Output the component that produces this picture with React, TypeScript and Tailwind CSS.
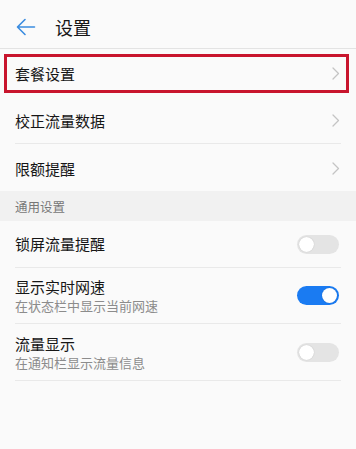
import React from "react";

const font = { fontFamily: '"Noto Sans CJK SC", "Noto Sans", sans-serif' };

function Chevron() {
  return (
    <svg width="8" height="13" viewBox="0 0 8 13" fill="none" className="mr-[16px]">
      <polyline points="1,1 6.5,6.5 1,12" stroke="#c4c4c4" strokeWidth="1.3" strokeLinecap="round" strokeLinejoin="round" />
    </svg>
  );
}

function Toggle({ on }: { on: boolean }) {
  return (
    <div
      className={
        on
          ? "mr-[17px] flex h-[19px] w-[42px] items-center justify-end rounded-full bg-[#1a7bf2] px-[2px]"
          : "mr-[17px] flex h-[19px] w-[42px] items-center justify-start rounded-full bg-[#e4e4e4] px-[2px]"
      }
    >
      <div className="h-[15px] w-[15px] rounded-full bg-white shadow-[0_0_1px_rgba(0,0,0,0.25)]" />
    </div>
  );
}

function NavRow({ label, divider, boxed }: { label: string; divider?: boolean; boxed?: boolean }) {
  return (
    <div className="relative">
      <div className="flex h-[47px] items-center justify-between pl-[15px] pt-[2px]">
        <span className="text-[15px] leading-[20px] text-[#161616]">{label}</span>
        <Chevron />
      </div>
      {divider && <div className="ml-[15px] mr-[15px] h-px bg-[#e9e9e9]" />}
      {boxed && (
        <div className="pointer-events-none absolute left-[4px] right-[7px] top-[5px] h-[39px] border-[3px] border-[#c8152d]" />
      )}
    </div>
  );
}

function ToggleRow({ label, sub, on, tall }: { label: string; sub?: string; on: boolean; tall?: boolean }) {
  const h = !sub ? "h-[46px]" : tall ? "h-[56px]" : "h-[55px]";
  return (
    <div>
      <div className={"flex items-center justify-between pl-[15px] " + h}>
        <div className="flex flex-col">
          <span className="text-[15px] leading-[20px] text-[#161616]">{label}</span>
          {sub && <span className="text-[13px] leading-[17px] text-[#8c8c8c]">{sub}</span>}
        </div>
        <Toggle on={on} />
      </div>
      <div className="ml-[15px] mr-[15px] h-px bg-[#e9e9e9]" />
    </div>
  );
}

export default function App() {
  return (
    <div className="h-[449px] w-[356px] overflow-hidden bg-[#fafafa]" style={font}>
      <header className="flex h-[49px] items-center border-b border-[#e3e3e3] pt-[6px]">
        <svg width="20" height="18" viewBox="0 0 20 18" fill="none" className="ml-[16px]">
          <path d="M18.5 9H2M9 1.5L1.5 9L9 16.5" stroke="#3a8ce0" strokeWidth="1.6" strokeLinecap="round" strokeLinejoin="round" />
        </svg>
        <h1 className="ml-[19px] text-[18px] leading-[24px] text-[#161616]">设置</h1>
      </header>

      <NavRow label="套餐设置" boxed />
      <NavRow label="校正流量数据" divider />
      <NavRow label="限额提醒" />

      <div className="flex h-[30px] items-center bg-[#f1f1f1] pl-[15px] pt-[2px]">
        <span className="text-[12.5px] leading-[16px] text-[#777777]">通用设置</span>
      </div>

      <ToggleRow label="锁屏流量提醒" on={false} />
      <ToggleRow label="显示实时网速" sub="在状态栏中显示当前网速" on />
      <ToggleRow label="流量显示" sub="在通知栏显示流量信息" on={false} tall />
    </div>
  );
}
